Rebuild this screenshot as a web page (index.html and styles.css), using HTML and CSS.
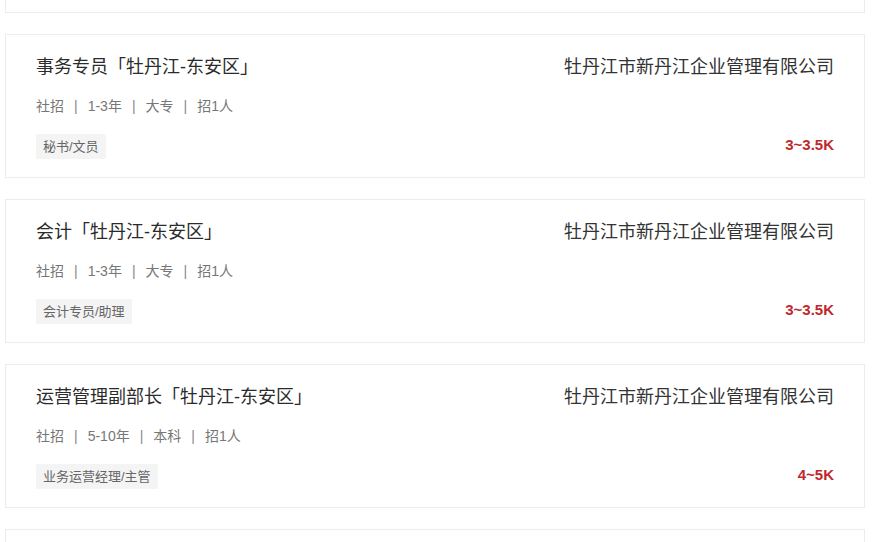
FILE: index.html
```html
<!DOCTYPE html>
<html lang="zh-CN">
<head>
    <meta charset="UTF-8">
    <title>职位列表</title>
    <link rel="stylesheet" href="styles.css">
</head>
<body>
<div class="job-list">
    <div class="job-card">
        <div class="job-left">
            <div class="job-title">行政助理「牡丹江-东安区」</div>
            <div class="job-meta">社招<span class="sep">|</span>1-3年<span class="sep">|</span>大专<span class="sep">|</span>招1人</div>
            <div class="job-tags"><span class="tag">行政专员/助理</span></div>
        </div>
        <div class="job-right">
            <div class="company">牡丹江市新丹江企业管理有限公司</div>
            <div class="salary">3~3.5K</div>
        </div>
    </div>

    <div class="job-card">
        <div class="job-left">
            <div class="job-title">事务专员「牡丹江-东安区」</div>
            <div class="job-meta">社招<span class="sep">|</span>1-3年<span class="sep">|</span>大专<span class="sep">|</span>招1人</div>
            <div class="job-tags"><span class="tag">秘书/文员</span></div>
        </div>
        <div class="job-right">
            <div class="company">牡丹江市新丹江企业管理有限公司</div>
            <div class="salary">3~3.5K</div>
        </div>
    </div>

    <div class="job-card">
        <div class="job-left">
            <div class="job-title">会计「牡丹江-东安区」</div>
            <div class="job-meta">社招<span class="sep">|</span>1-3年<span class="sep">|</span>大专<span class="sep">|</span>招1人</div>
            <div class="job-tags"><span class="tag">会计专员/助理</span></div>
        </div>
        <div class="job-right">
            <div class="company">牡丹江市新丹江企业管理有限公司</div>
            <div class="salary">3~3.5K</div>
        </div>
    </div>

    <div class="job-card">
        <div class="job-left">
            <div class="job-title">运营管理副部长「牡丹江-东安区」</div>
            <div class="job-meta">社招<span class="sep">|</span>5-10年<span class="sep">|</span>本科<span class="sep">|</span>招1人</div>
            <div class="job-tags"><span class="tag">业务运营经理/主管</span></div>
        </div>
        <div class="job-right">
            <div class="company">牡丹江市新丹江企业管理有限公司</div>
            <div class="salary">4~5K</div>
        </div>
    </div>

    <div class="job-card">
        <div class="job-left">
            <div class="job-title">出纳「牡丹江-东安区」</div>
            <div class="job-meta">社招<span class="sep">|</span>1-3年<span class="sep">|</span>大专<span class="sep">|</span>招1人</div>
            <div class="job-tags"><span class="tag">出纳</span></div>
        </div>
        <div class="job-right">
            <div class="company">牡丹江市新丹江企业管理有限公司</div>
            <div class="salary">3~3.5K</div>
        </div>
    </div>
</div>
</body>
</html>
```

FILE: styles.css
```css
body {
  margin: 0;
  background: #fff;
  font-family: "Liberation Sans", "Noto Sans CJK SC", sans-serif;
  overflow: hidden;
}

/* list of job cards, first one scrolled partly out of view */
.job-list {
  margin-top: -131px;
  margin-left: 5px;
  width: 860px;
  display: flex;
  flex-direction: column;
  gap: 21px;
}

.job-card {
  box-sizing: border-box;
  height: 144px;
  border: 1px solid #ececec;
  background: #fff;
  padding: 18px 30px 19px 30px;
  display: flex;
  justify-content: space-between;
}

.job-left {
  display: flex;
  flex-direction: column;
}

.job-title {
  font-size: 18px;
  line-height: 28px;
  color: #2b2b2b;
}

.job-meta {
  margin-top: 15px;
  font-size: 14px;
  line-height: 20px;
  color: #777;
}

.sep {
  margin: 0 10px;
  color: #888;
}

.job-tags {
  margin-top: 18px;
}

.tag {
  display: inline-block;
  background: #f4f4f4;
  color: #666;
  font-size: 13px;
  line-height: 25px;
  padding: 0 7px;
  border-radius: 2px;
}

.job-right {
  display: flex;
  flex-direction: column;
  align-items: flex-end;
  justify-content: space-between;
}

.company {
  font-size: 18px;
  line-height: 28px;
  color: #333;
}

.salary {
  font-size: 15px;
  font-weight: bold;
  line-height: 25px;
  color: #c0282d;
  padding-bottom: 1px;
}
```
